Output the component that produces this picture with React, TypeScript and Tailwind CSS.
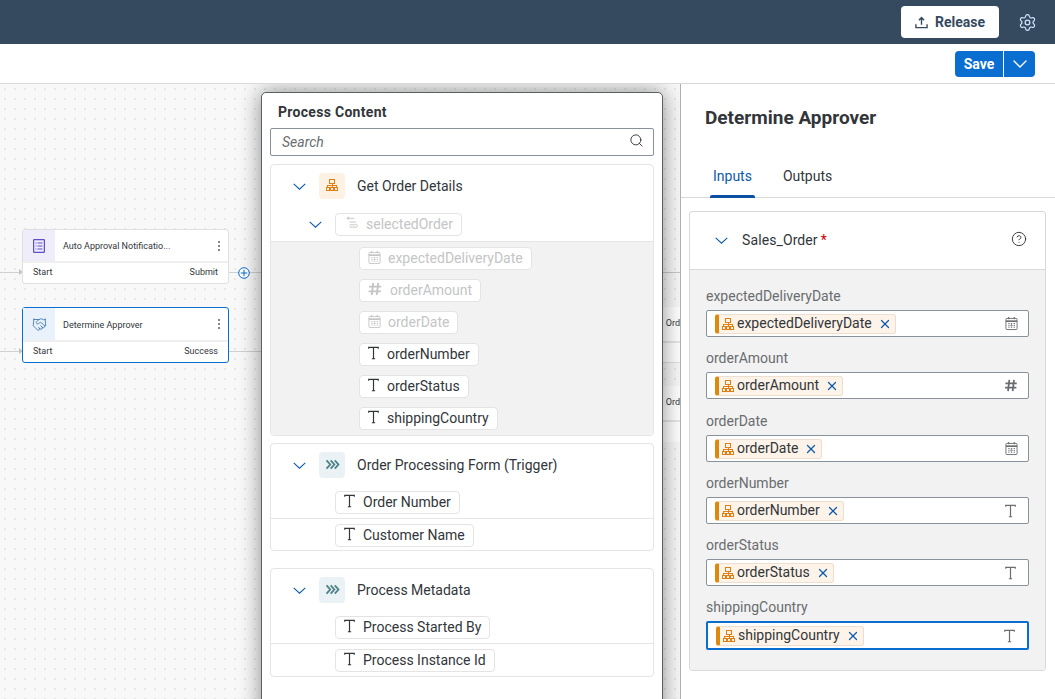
import React from "react";
import { Settings, ChevronDown, Search, Handshake, X, CircleHelp } from "lucide-react";

const OrgIcon = ({ className = "" }: { className?: string }) => (
  <svg viewBox="0 0 12 12" className={className} fill="none" stroke="currentColor" strokeWidth="1" shapeRendering="crispEdges">
    <rect x="3.5" y="0.5" width="5" height="3.5" />
    <path d="M6 4v2.5M1.5 8.5v-2h9v2M6 6.5v2" />
    <rect x="0.5" y="8.5" width="3" height="3" />
    <rect x="4.5" y="8.5" width="3" height="3" />
    <rect x="8.5" y="8.5" width="3" height="3" />
  </svg>
);

const CalIcon = ({ className = "" }: { className?: string }) => (
  <svg viewBox="0 0 14 15" className={className} fill="none" stroke="currentColor" strokeWidth="1">
    <rect x="1" y="2" width="12" height="12" rx="1" />
    <path d="M1 5h12" strokeWidth="1.8" />
    <path d="M4 .6v2.4M10 .6v2.4" strokeWidth="1.2" />
    <path d="M3.5 7.5h1.5M6.3 7.5h1.5M9.3 7.5h1.5M3.5 9.5h1.5M9.3 9.5h1.5M3.5 11.5h1.5M6.3 11.5h1.5M9.3 11.5h1.5" />
    <circle cx="7" cy="9.5" r="0.8" />
  </svg>
);

const HashIcon = ({ className = "" }: { className?: string }) => (
  <svg viewBox="0 0 14 14" className={className} fill="none" stroke="currentColor" strokeWidth="1.9">
    <path d="M5.2 1 3.8 13M10.2 1 8.8 13M1 4.6h12.2M.6 9.4h12.2" />
  </svg>
);

const TIcon = ({ className = "" }: { className?: string }) => (
  <svg viewBox="0 0 12 14" className={className} fill="none" stroke="currentColor" strokeWidth="1.3">
    <path d="M.8 2.4V.9h10.4v1.5M6 .9v12.4M4.2 13.3h3.6" />
  </svg>
);

const Chevrons = ({ className = "" }: { className?: string }) => (
  <svg viewBox="0 0 16 12" className={className} fill="none" stroke="currentColor" strokeWidth="2">
    <path d="m1.5 1.5 4 4.5-4 4.5M6 1.5l4 4.5-4 4.5M10.5 1.5l4 4.5-4 4.5" />
  </svg>
);

const ListIcon = ({ className = "" }: { className?: string }) => (
  <svg viewBox="0 0 12 14" className={className} fill="none" stroke="currentColor" strokeWidth="1">
    <rect x="0.6" y="0.6" width="10.8" height="12.8" rx="0.6" strokeWidth="1.2" />
    <path d="M2.5 4h1M4.5 4h5M2.5 7h1M4.5 7h5M2.5 10h1M4.5 10h5" />
  </svg>
);

const StructureIcon = ({ className = "" }: { className?: string }) => (
  <svg viewBox="0 0 16 14" className={className} fill="none" stroke="currentColor" strokeWidth="1">
    <path d="M5.5 1 3 2.5 5 4M3 2.5h8M6 6.5h7M6 9.5h6.5M6 12h7M13 8.5l1.5 2-1.5 2" />
  </svg>
);

const Caret = ({ className = "" }: { className?: string }) => (
  <svg viewBox="0 0 13 7" className={`w-[13px] h-[7px] shrink-0 text-[#0a5bab] ${className}`} fill="none" stroke="currentColor" strokeWidth="1.1">
    <path d="m.7.8 5.8 5.4L12.3.8" />
  </svg>
);

const Arrow = ({ className = "" }: { className?: string }) => (
  <svg viewBox="0 0 4 6" className={`absolute w-[4px] h-[6px] text-[#c4c4c4] ${className}`} fill="currentColor">
    <path d="M0 0l4 3-4 3z" />
  </svg>
);

const Node = ({
  title, right, icon, iconBg, selected,
}: { title: string; right: string; icon: React.ReactNode; iconBg: string; selected?: boolean }) => (
  <div className={`w-[207px] rounded-[3px] bg-white flex flex-col text-[9px] text-[#32363a] ${selected ? "border border-[#0a6ed1] h-[56px]" : "border border-[#e0e0e0] h-[55px]"}`}>
    <div className={`flex items-center border-b-2 border-[#efefef] ${selected ? "h-[34px]" : "h-[33px]"}`}>
      <div className={`w-[32px] h-full flex items-center justify-center ${iconBg}`}>{icon}</div>
      <span className={`ml-2 flex-1 ${selected ? "translate-y-[2px]" : "translate-y-px"}`}>{title}</span>
      <div className="mr-[8px] flex flex-col gap-[2px]">
        <i className="block w-[2px] h-[2px] bg-[#85888b]" />
        <i className="block w-[2px] h-[2px] bg-[#85888b]" />
        <i className="block w-[2px] h-[2px] bg-[#85888b]" />
      </div>
    </div>
    <div className="flex flex-1 justify-between items-center px-[10px]">
      <span>Start</span>
      <span>{right}</span>
    </div>
  </div>
);

const Chip = ({
  label, icon, dim, ml,
}: { label: string; icon: "t" | "cal" | "hash"; dim?: boolean; ml: string }) => (
  <div className={`${ml} h-[23px] w-fit flex items-center rounded-[4px] border border-[#e4e4e4] bg-white px-2 text-[14px] ${dim ? "text-[#c4c5c6]" : "text-[#32363a]"}`}>
    {icon === "t" && <TIcon className="w-[11px] h-[14px] mr-[8px] -mt-[3px] shrink-0" />}
    {icon === "cal" && <CalIcon className="w-[13px] h-[15px] mr-[7px] -mt-[2px] shrink-0" />}
    {icon === "hash" && <HashIcon className="w-[14px] h-[14px] mr-[8px] -mt-[3px] shrink-0" />}
    {label}
  </div>
);

const SectionHead = ({ title, kind }: { title: string; kind: "org" | "chev" }) => (
  <div className="flex items-center h-[42px] pl-[22px]">
    <Caret />
    <div className={`ml-[13px] w-[26px] h-[26px] rounded-[4px] flex items-center justify-center ${kind === "org" ? "bg-[#fdf1e4] text-[#e07f14]" : "bg-[#ebf2f5] text-[#4d8289]"}`}>
      {kind === "org" ? <OrgIcon className="w-[12px] h-[12px] -mt-[2px]" /> : <Chevrons className="w-[15px] h-[11px] -mt-[2px]" />}
    </div>
    <span className="ml-[12px] text-[14px] text-[#32363a]">{title}</span>
  </div>
);

const Field = ({
  label, icon, focus, gap,
}: { label: string; icon: "t" | "cal" | "hash"; focus?: boolean; gap: string }) => (
  <div className={gap}>
    <div className="h-[16px] leading-[16px] text-[14px] text-[#6a6d70] mb-[6px]">{label}</div>
    <div className={`flex items-center bg-white rounded-[2px] pl-[8px] pr-[10px] ${focus ? "h-[29px] border-2 border-[#0a6ed1]" : "h-[27px] border border-[#89919a]"}`}>
      <div className="h-[20px] flex items-center rounded-[3px] bg-[#fdf3e8] border border-[#ecdfd0] border-l-[4px] border-l-[#de890d] pl-[3px] pr-[3px] text-[14px] text-[#32363a]">
        <OrgIcon className="w-[12px] h-[12px] text-[#e07f14] mr-[3px]" />
        <span>{label}</span>
        <X size={14} strokeWidth={2.2} className="ml-[6px] text-[#0a5bab]" />
      </div>
      <div className="ml-auto text-[#6a6d70]">
        {icon === "t" && <TIcon className="w-[11px] h-[14px] mr-[2px]" />}
        {icon === "cal" && <CalIcon className="w-[13px] h-[15px]" />}
        {icon === "hash" && <HashIcon className="w-[14px] h-[13px]" />}
      </div>
    </div>
  </div>
);

export default function App() {
  return (
    <div className="w-[1055px] h-[699px] overflow-hidden flex flex-col bg-white font-['Roboto',sans-serif]">
      {/* Shell bar */}
      <header className="h-[44px] shrink-0 bg-[#354a5f] flex items-center justify-end">
        <button className="h-[32px] w-[98px] rounded-[4px] bg-white flex items-center justify-center gap-[7px] text-[14px] font-bold text-[#354a5f]">
          <svg viewBox="0 0 14 14" className="w-[13px] h-[13px]" fill="none" stroke="currentColor" strokeWidth="1.5">
            <path d="M7 9.5V2M4.2 4.5 7 1.7l2.8 2.8M1 9v3.5h12V9" />
          </svg>
          Release
        </button>
        <Settings size={19} strokeWidth={1.5} className="text-[#d1e8ff] ml-[19px] mr-[18px]" />
      </header>

      {/* Toolbar */}
      <div className="h-[40px] shrink-0 border-b border-[#d9d9d9] flex items-center justify-end pr-[20px]">
        <div className="flex h-[26px] text-white text-[14px] font-bold">
          <div className="w-[48px] bg-[#0a6ed1] rounded-l-[4px] flex items-center justify-center"><span className="translate-y-px">Save</span></div>
          <div className="w-[31px] ml-px bg-[#0a6ed1] rounded-r-[4px] flex items-center justify-center">
            <ChevronDown size={24} strokeWidth={1.4} />
          </div>
        </div>
      </div>

      <div className="flex-1 flex min-h-0">
        {/* Canvas */}
        <div className="relative w-[680px] shrink-0 bg-[#f8f8f8] bg-[radial-gradient(#e6e6e6_0.7px,transparent_0.8px)] bg-[size:10px_10px] overflow-hidden">
          {/* edges */}
          <div className="absolute left-0 top-[188px] w-[22px] h-px bg-[#d0d0d0]" />
          <div className="absolute left-0 top-[267px] w-[22px] h-px bg-[#d0d0d0]" />
          <div className="absolute left-[229px] top-[188px] w-[32px] h-px bg-[#d0d0d0]" />
          <div className="absolute left-[229px] top-[267px] w-[32px] h-px bg-[#d0d0d0]" />
          <div className="absolute left-[662px] top-[188px] w-[18px] h-px bg-[#c8c8c8]" />
          <Arrow className="left-[19px] top-[185px]" />
          <Arrow className="left-[19px] top-[264px]" />
          <svg viewBox="0 0 12 12" className="absolute left-[238px] top-[183px] w-[12px] h-[12px] text-[#0a6ed1]" fill="white" stroke="currentColor" strokeWidth="1">
            <circle cx="6" cy="6" r="5.3" />
            <path d="M6 2.8v6.4M2.8 6h6.4" />
          </svg>

          <div className="absolute left-[22px] top-[145px]">
            <Node title="Auto Approval Notificatio..." right="Submit" iconBg="bg-[#efedfa]" icon={<ListIcon className="w-[12px] h-[14px] text-[#5d50c5]" />} />
          </div>
          <div className="absolute left-[22px] top-[223px]">
            <Node selected title="Determine Approver" right="Success" iconBg="bg-[#e9f2fb]" icon={<Handshake size={15} strokeWidth={1.3} className="text-[#356fa8]" />} />
          </div>

          {/* cards behind the popover */}
          <div className="absolute left-[640px] top-[223px] w-[40px] h-[56px] bg-white border-b border-[#e0e0e0] text-[9px] text-[#32363a] flex flex-col">
            <div className="h-[36px] shrink-0 flex items-center justify-end border-b-2 border-[#e6e6e6]">Ord</div>
          </div>
          <div className="absolute left-[640px] top-[302px] w-[40px] h-[56px] bg-white text-[9px] text-[#32363a] flex flex-col">
            <div className="h-[36px] shrink-0 flex items-center justify-end border-b-2 border-[#e6e6e6]">Ord</div>
          </div>

          {/* Popover */}
          <div className="absolute left-[261px] top-[8px] w-[402px] h-[640px] bg-white border border-[#5a5f64] rounded-t-[5px] shadow-[0_0_22px_rgba(0,0,0,0.45)] px-[8px]">
            <div className="h-[35px] pt-[10px] pl-[8px] text-[14px] leading-[18px] font-bold tracking-[0.3px] text-[#32363a]">Process Content</div>
            <div className="h-[28px] border border-[#89919a] rounded-[2px] flex items-center pl-[11px] pr-[9px] text-[14px] italic text-[#6a6d70]">
              <span>Search</span>
              <Search size={15} strokeWidth={1.5} className="ml-auto text-[#32363a] -mt-[3px]" />
            </div>

            <div className="mt-[8px] h-[272px] border border-[#e5e5e5] rounded-[4px] overflow-hidden flex flex-col">
              <SectionHead title="Get Order Details" kind="org" />
              <div className="flex items-center h-[34px] pl-[38px]">
                <Caret />
                <div className="ml-[13px] h-[23px] flex items-center rounded-[4px] border border-[#e4e4e4] px-2 text-[14px] text-[#c4c5c6]">
                  <StructureIcon className="w-[15px] h-[13px] mr-[7px] -mt-[4px]" />
                  selectedOrder
                </div>
              </div>
              <div className="flex-1 bg-[#f2f2f2] border-t border-[#e5e5e5] flex flex-col gap-[9px] pt-[5px]">
                <Chip ml="ml-[88px]" dim icon="cal" label="expectedDeliveryDate" />
                <Chip ml="ml-[88px]" dim icon="hash" label="orderAmount" />
                <Chip ml="ml-[88px]" dim icon="cal" label="orderDate" />
                <Chip ml="ml-[88px]" icon="t" label="orderNumber" />
                <Chip ml="ml-[88px]" icon="t" label="orderStatus" />
                <Chip ml="ml-[88px]" icon="t" label="shippingCountry" />
              </div>
            </div>

            <div className="mt-[7px] h-[108px] border border-[#e5e5e5] rounded-[4px] flex flex-col">
              <SectionHead title="Order Processing Form (Trigger)" kind="chev" />
              <div className="h-[33px] pt-[5px] border-b border-[#e5e5e5]"><Chip ml="ml-[64px]" icon="t" label="Order Number" /></div>
              <div className="pt-[5px]"><Chip ml="ml-[64px]" icon="t" label="Customer Name" /></div>
            </div>

            <div className="mt-[17px] h-[109px] border border-[#e5e5e5] rounded-[4px] flex flex-col">
              <SectionHead title="Process Metadata" kind="chev" />
              <div className="h-[33px] pt-[5px] border-b border-[#e5e5e5]"><Chip ml="ml-[64px]" icon="t" label="Process Started By" /></div>
              <div className="pt-[5px]"><Chip ml="ml-[64px]" icon="t" label="Process Instance Id" /></div>
            </div>
          </div>
        </div>

        {/* Right panel */}
        <aside className="relative flex-1 bg-white border-l border-[#b0b0b0] flex flex-col min-w-0">
          <div className="h-[68px] pl-[24px] pt-[22px] text-[19px] leading-[24px] font-bold text-[#32363a]">Determine Approver</div>
          <div className="h-[46px] flex pl-[29px] gap-[28px] border-b border-[#d9d9d9] text-[14px]">
            <div className="relative text-[#0a5bab] pt-[14px] px-[3px]">
              Inputs
              <div className="absolute left-0 right-0 bottom-[-1px] h-[3px] rounded-t-[2px] bg-[#0a4fa0]" />
            </div>
            <div className="text-[#32363a] pt-[14px]">Outputs</div>
          </div>
          <div className="ml-[8px] mr-[9px] mt-[13px] h-[460px] border border-[#d9d9d9] rounded-[3px] flex flex-col overflow-hidden">
            <div className="h-[59px] shrink-0 border-b border-[#d9d9d9] flex items-center pl-[25px] pr-[18px] -mt-px text-[14px] text-[#32363a]">
              <Caret />
              <span className="ml-[14px] tracking-[0.1px]">Sales_Order</span>
              <span className="ml-[3px] text-[14px] text-[#cc0000]">*</span>
              <CircleHelp size={16} strokeWidth={1.4} className="ml-auto text-[#32363a] -translate-y-px" />
            </div>
            <div className="flex-1 bg-[#f2f2f2] px-[16px] pt-[18px]">
              <Field label="expectedDeliveryDate" icon="cal" gap="" />
              <Field label="orderAmount" icon="hash" gap="mt-[13px]" />
              <Field label="orderDate" icon="cal" gap="mt-[14px]" />
              <Field label="orderNumber" icon="t" gap="mt-[13px]" />
              <Field label="orderStatus" icon="t" gap="mt-[13px]" />
              <Field label="shippingCountry" icon="t" focus gap="mt-[13px]" />
            </div>
          </div>
        </aside>
      </div>
    </div>
  );
}
